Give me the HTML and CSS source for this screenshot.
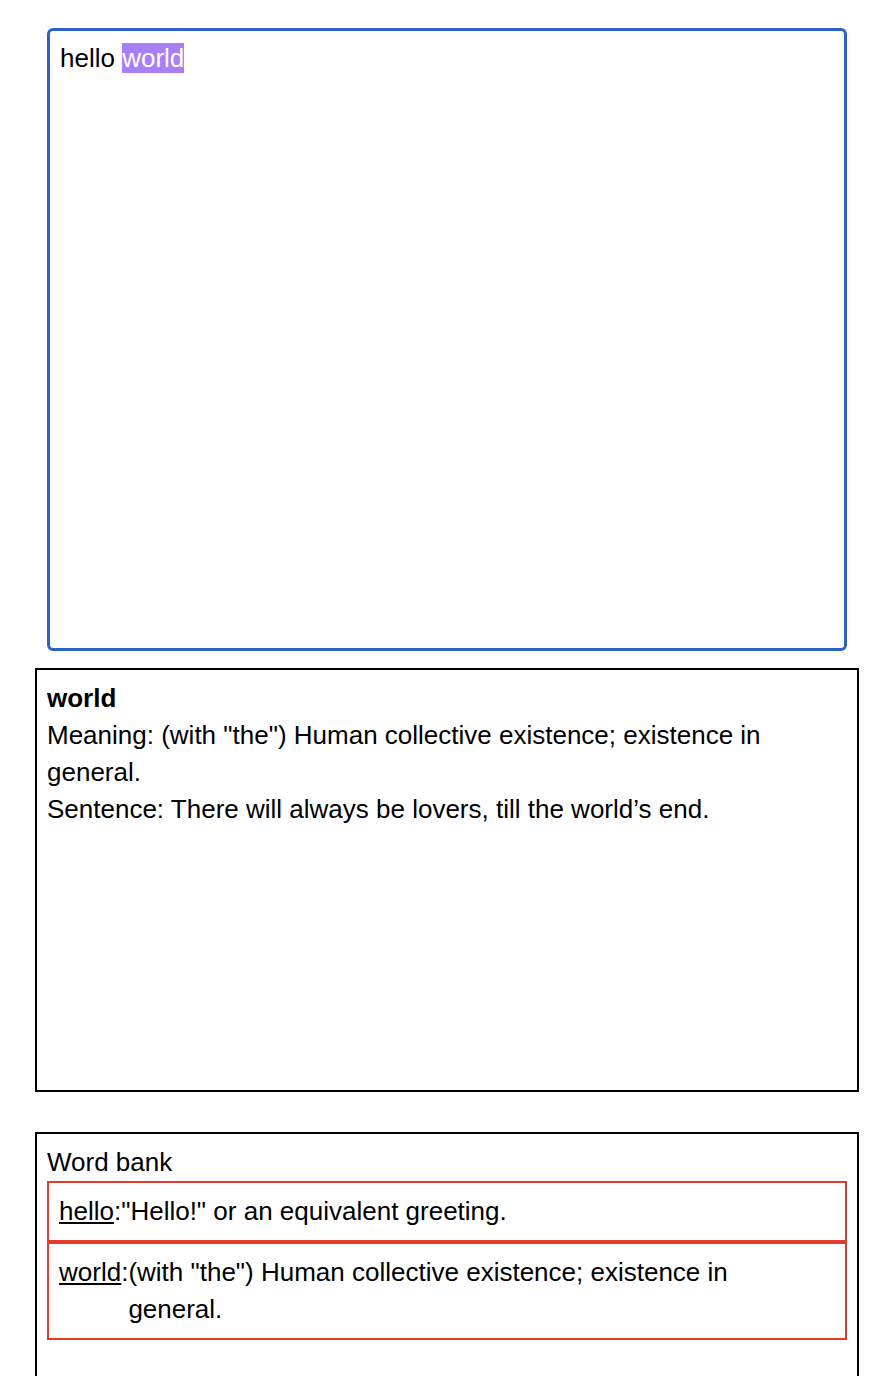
FILE: index.html
```html
<!DOCTYPE html>
<html lang="en">
<head>
<meta charset="utf-8">
<title>Word lookup</title>
<link rel="stylesheet" href="styles.css">
</head>
<body>
<div class="page">
  <div class="editor" contenteditable="true">hello <span class="hl">world</span></div>

  <section class="panel def">
    <div class="def-word">world</div>
    <div class="def-line">Meaning: (with "the") Human collective existence; existence in general.</div>
    <div class="def-line">Sentence: There will always be lovers, till the world’s end.</div>
  </section>

  <section class="panel bank">
    <div class="bank-title">Word bank</div>
    <div class="entry">
      <span class="term"><span class="term-word">hello</span>:</span>
      <span class="meaning">"Hello!" or an equivalent greeting.</span>
    </div>
    <div class="entry">
      <span class="term"><span class="term-word">world</span>:</span>
      <span class="meaning">(with "the") Human collective existence; existence in general.</span>
    </div>
  </section>
</div>
</body>
</html>
```

FILE: styles.css
```css
html, body {
  margin: 0;
  padding: 0;
  background: #ffffff;
}

body {
  font-family: "Liberation Sans", Arial, sans-serif;
  font-size: 26px;
  line-height: 37px;
  color: #000000;
}

.page {
  width: 824px;
  margin-left: 35px;
  padding-top: 28px;
  display: flex;
  flex-direction: column;
}

.editor {
  box-sizing: border-box;
  width: 800px;
  height: 623px;
  align-self: center;
  border: 3px solid #2c61c9;
  border-radius: 6px;
  padding: 9px 10px;
  outline: none;
}

.hl {
  background: #a87ff7;
  color: #ffffff;
}

.panel {
  box-sizing: border-box;
  height: 424px;
  border: 2px solid #000000;
  padding: 10px;
}

.def {
  margin-top: 17px;
}

.def-word {
  font-weight: bold;
}

.bank {
  margin-top: 40px;
}

.entry {
  display: flex;
  border: 2px solid #e5392a;
  padding: 10px 40px 10px 10px;
}

.term {
  flex-shrink: 0;
}

.term-word {
  text-decoration: underline;
}

.meaning {
  flex: 1;
  min-width: 0;
}
```
